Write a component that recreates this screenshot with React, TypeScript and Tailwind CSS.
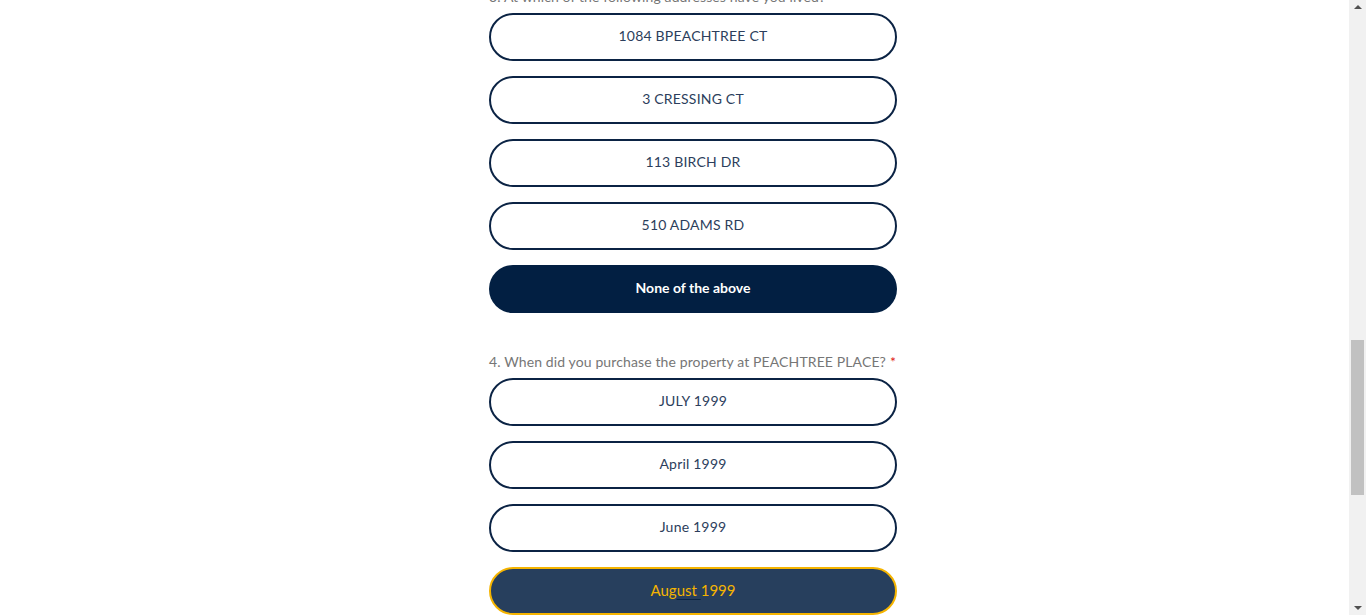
import { useState } from "react"

// answer options for the two visible questions
const addressOptions = ["1084 BPEACHTREE CT", "3 CRESSING CT", "113 BIRCH DR", "510 ADAMS RD", "None of the above"]
const purchaseOptions = ["JULY 1999", "April 1999", "June 1999", "August 1999"]

function OptionButton({ label, variant }: { label: string; variant: "plain" | "filled" | "picked" }) {
    if (variant === "filled") {
        return (
            <button className="h-12 w-full rounded-full bg-[#021f42] pb-[3px] text-[14px] font-bold text-white">
                {label}
            </button>
        )
    }
    if (variant === "picked") {
        // focused / hovered state with the amber ring
        return (
            <button className="h-12 w-full rounded-full border-2 border-[#f5b400] bg-[#273f5d] pb-[2px] text-[15px] text-[#f5b400]">
                Aug<span className="underline decoration-[#0b2545] underline-offset-[3px]">ust </span>1999
            </button>
        )
    }
    return (
        <button className="h-12 w-full rounded-full border-2 border-[#0b2344] bg-white pb-[3px] text-[14px] tracking-[0.2px] text-[#2c3e5c]">
            {label}
        </button>
    )
}

function Question({ title, required, children }: { title: string; required?: boolean; children: React.ReactNode }) {
    return (
        <div>
            <p className="mb-[6px] h-5 whitespace-nowrap text-[14px] leading-5 tracking-[0.12px] text-[#767676]">
                {title}
                {required && <span className="ml-1 text-[#e02020]">*</span>}
            </p>
            <div className="flex flex-col gap-[15px]">{children}</div>
        </div>
    )
}

function FakeScrollbar() {
    return (
        <div className="flex h-full w-[17px] shrink-0 flex-col items-center bg-[#f1f1f1]">
            <div className="mt-[5px] h-0 w-0 border-x-[4px] border-b-[4px] border-x-transparent border-b-[#505050]" />
            <div className="mt-[331px] h-[155px] w-[13px] bg-[#c1c1c1]" />
            <div className="mt-auto mb-[5px] h-0 w-0 border-x-[4px] border-t-[4px] border-x-transparent border-t-[#505050]" />
        </div>
    )
}

export default function App() {
    const [picked] = useState("August 1999")

    return (
        <div className="flex h-[615px] w-full overflow-hidden bg-white" style={{ fontFamily: "Lato, 'Open Sans', sans-serif" }}>
            <main className="flex-1">
                <div className="ml-[489px] mt-[-13px] w-[408px]">
                    <Question title="3. At which of the following addresses have you lived?">
                        {addressOptions.map((a) => (
                            <OptionButton key={a} label={a} variant={a === "None of the above" ? "filled" : "plain"} />
                        ))}
                    </Question>
                    <div className="mt-[39px]">
                        <Question title="4. When did you purchase the property at PEACHTREE PLACE?" required>
                            {purchaseOptions.map((p) => (
                                <OptionButton key={p} label={p} variant={p === picked ? "picked" : "plain"} />
                            ))}
                        </Question>
                    </div>
                </div>
            </main>
            <FakeScrollbar />
        </div>
    )
}
